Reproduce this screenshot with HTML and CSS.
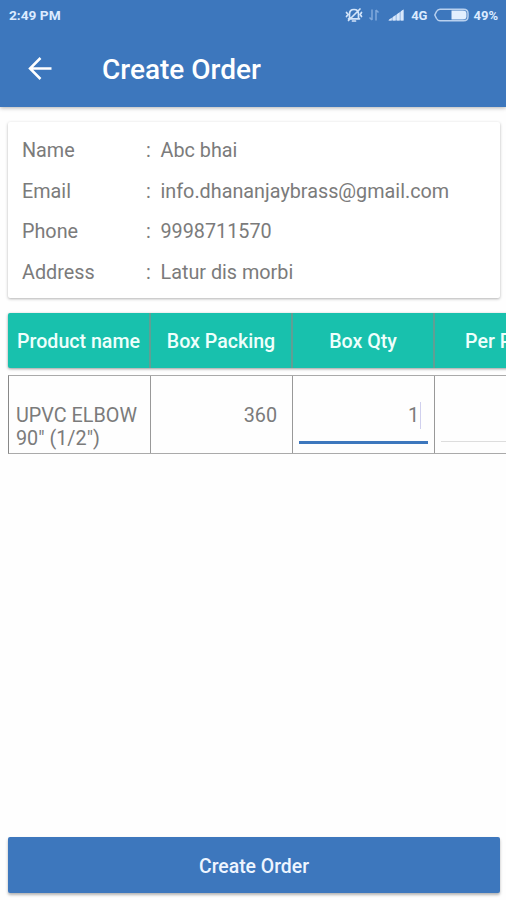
FILE: index.html
```html
<!DOCTYPE html>
<html lang="en">
<head>
<meta charset="utf-8">
<title>Create Order</title>
<link rel="stylesheet" href="styles.css">
</head>
<body>
<div class="screen">
  <header class="topbar">
    <div class="status">
      <span class="time">2:49 PM</span>
      <svg class="mute" width="18" height="18" viewBox="0 0 18 18" fill="none" stroke="#d3e4f9" stroke-width="1.7" stroke-linecap="round" stroke-linejoin="round"><path d="M4.500 12.500V8c0-2.800 1.800-4.500 4.500-4.500s4.500 1.700 4.500 4.500v4.500M3.500 12.800h11M7.500 15h3M3.500 14.500L15 3M1.500 6.500l1.500 2-1.500 2M16.500 6.500l-1.200 2 1.200 2"/></svg>
      <svg class="data" width="12" height="14" viewBox="0 0 12 14" fill="none" stroke="#80a9dc" stroke-width="1.500"><path d="M4 1.500V12M1.500 9.500L4 12M8 12.500V2M8 2l2.500 2.500"/></svg>
      <svg class="signal" width="16" height="12" viewBox="0 0 16 12"><path d="M0 11.500L15.500.5v11z" fill="#a9c6eb"/><path d="M1 11.500V10.800l2.500-1.800v2.500zM5 11.500V8l2.500-1.800v5.300zM9 11.500V5.200l2.500-1.800v8.100zM13 11.500V2.300L15.500.5v11z" fill="#d9e8fb"/></svg>
      <span class="net">4G</span>
      <svg class="battery" width="35" height="14" viewBox="0 0 35 14"><path d="M6 1.200h23.500q4.500 0 4.500 4.300v3q0 4.300-4.500 4.300H6Q3.800 12.800 2.500 10.500L.8 7l1.700-3.500Q3.800 1.200 6 1.200z" fill="none" stroke="#b9d1ef" stroke-width="1.500"/><path d="M17.500 2.500H29q3.500 0 3.500 3v3q0 3-3.500 3H17.500z" fill="#e3effe"/></svg>
      <span class="percent">49%</span>
    </div>
    <div class="appbar">
      <svg class="back" width="24" height="24" viewBox="0 0 24 24" fill="none" stroke="#fff" stroke-width="2.500"><path d="M23.500 11.500H2.500M12.500 1L2 11.500 12.500 22"/></svg>
      <h1 class="title">Create Order</h1>
    </div>
  </header>
  <main class="content">
    <section class="card">
      <div class="field"><span class="label">Name</span><span class="colon">:</span><span>Abc bhai</span></div>
      <div class="field"><span class="label">Email</span><span class="colon">:</span><span>info.dhananjaybrass@gmail.com</span></div>
      <div class="field"><span class="label">Phone</span><span class="colon">:</span><span>9998711570</span></div>
      <div class="field"><span class="label">Address</span><span class="colon">:</span><span>Latur dis morbi</span></div>
    </section>
    <div class="table">
      <div class="row head">
        <div class="th">Product name</div>
        <div class="th">Box Packing</div>
        <div class="th">Box Qty</div>
        <div class="th">Per Price</div>
      </div>
      <div class="row body">
        <div class="td product">UPVC ELBOW<br>90" (1/2")</div>
        <div class="td packing">360</div>
        <div class="td"><div class="input active">1<span class="caret"></span></div></div>
        <div class="td"><div class="input"></div></div>
      </div>
    </div>
  </main>
  <button class="submit">Create Order</button>
</div>
</body>
</html>
```

FILE: styles.css
```css
* { box-sizing: border-box; }

body {
  margin: 0;
  background: #fefefe;
  color: #7b7b7b;
  font-family: Roboto, "Liberation Sans", sans-serif;
  font-size: 19.8px;
}

.screen {
  display: flex;
  flex-direction: column;
  width: 506px;
  height: 900px;
  overflow: hidden;
}

.topbar {
  height: 107px;
  flex: none;
  background: #3d77bd;
  box-shadow: 0 1px 4px rgba(0, 0, 0, 0.3);
}

.status {
  display: flex;
  align-items: center;
  height: 30px;
  padding: 0 8px 0 9px;
  color: #dcebff;
  font-size: 13px;
  font-weight: 700;
}

.time {
  margin-right: auto;
  font-size: 13.7px;
}

.mute { margin-right: 5px; }
.data { margin-right: 8px; }
.signal { margin-right: 7px; }
.net { margin-right: 7px; }
.battery { margin-right: 4px; }

.appbar {
  display: flex;
  align-items: center;
  height: 78px;
  padding-left: 28px;
}

.title {
  margin: 0 0 0 50px;
  color: #fff;
  font-size: 28px;
  font-weight: 500;
}

.content {
  flex: 1;
  padding: 15px 0 0 8px;
}

.card {
  width: 492px;
  height: 176px;
  padding: 8px 14px;
  border-radius: 2px;
  background: #fff;
  box-shadow: 0 1px 3px rgba(0, 0, 0, 0.3);
}

.field {
  display: flex;
  align-items: center;
  height: 40.7px;
}

.label { width: 124px; }
.colon { width: 14.5px; }

.table {
  width: 570px;
  margin-top: 15px;
}

.row {
  display: grid;
  grid-template-columns: repeat(4, 142px);
}

.head {
  grid-template-columns: 143px repeat(3, 142px);
  height: 55px;
  border-radius: 2px;
  background: #18c1ad;
  color: #effffc;
  font-size: 19.6px;
  font-weight: 500;
  box-shadow: 0 1px 3px rgba(0, 0, 0, 0.4);
}

.th {
  display: flex;
  align-items: center;
  justify-content: center;
  padding-top: 2px;
  border-right: 2px solid #609f94;
}

.body {
  height: 79px;
  margin-top: 7px;
  border: 1px solid #aaa;
  border-left-color: #888;
}

.td {
  padding: 0 6px;
  border-right: 1px solid #999;
}

.td.product {
  padding: 28px 0 0 7px;
  line-height: 23px;
  white-space: nowrap;
}

.td.packing {
  padding: 28px 15px 0 0;
  line-height: 23px;
  text-align: right;
}

.input {
  display: flex;
  align-items: center;
  justify-content: flex-end;
  height: 66px;
  padding: 13px 7px 0 0;
  border-bottom: 1px solid #ddd;
}

.active {
  height: 68px;
  border-bottom: 3px solid #3d77bd;
}

.caret {
  width: 1px;
  height: 27px;
  margin-left: 1px;
  background: #d0d0ee;
}

.submit {
  flex: none;
  width: 492px;
  height: 56px;
  margin: 0 0 7px 8px;
  padding: 2px 0 0;
  border: 0;
  border-radius: 2px;
  background: #3d77bd;
  color: #eef5ff;
  font: 500 19.4px Roboto, "Liberation Sans", sans-serif;
  box-shadow: 0 2px 3px rgba(0, 0, 0, 0.3);
}
```
